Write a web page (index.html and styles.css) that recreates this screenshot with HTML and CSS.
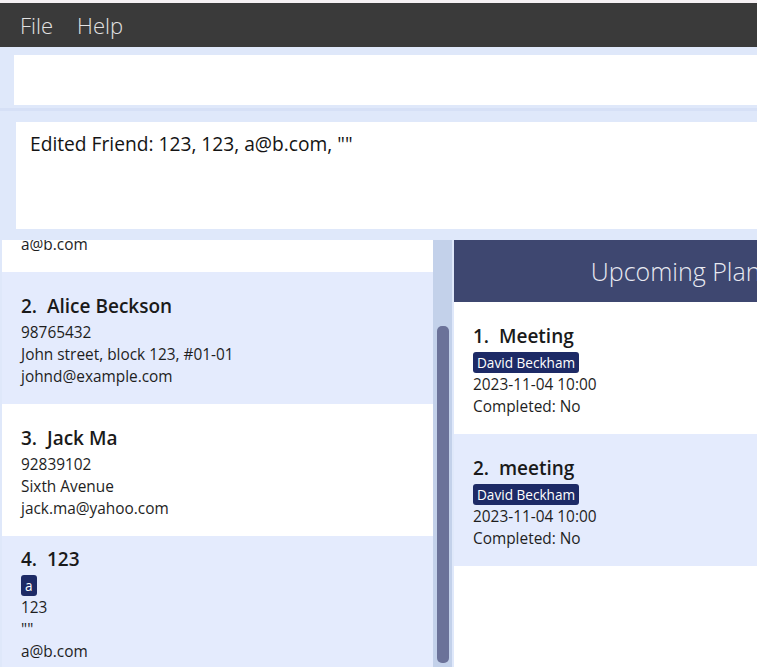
FILE: index.html
```html
<!DOCTYPE html>
<html lang="en">
<head>
<meta charset="utf-8">
<title>Address Book</title>
<link rel="stylesheet" href="styles.css">
</head>
<body>
<div class="app">
  <div class="topstrip"></div>
  <nav class="menubar">
    <span class="menu-item">File</span>
    <span class="menu-item">Help</span>
  </nav>
  <div class="command-area"><div class="command-box"></div></div>
  <div class="result-area"><div class="result-box">Edited Friend: 123, 123, a@b.com, ""</div></div>
  <div class="main">
    <div class="person-list">
      <div class="list-inner">
        <div class="cell odd">
          <div class="name">1.&nbsp;&nbsp;David Beckham</div>
          <div class="tags"><span class="tag">friends</span></div>
          <div class="line">87438807</div>
          <div class="line">Blk 30 Geylang Street 29</div>
          <div class="line">a@b.com</div>
        </div>
        <div class="cell even">
          <div class="name">2.&nbsp;&nbsp;Alice Beckson</div>
          <div class="line">98765432</div>
          <div class="line">John street, block 123, #01-01</div>
          <div class="line">johnd@example.com</div>
        </div>
        <div class="cell odd">
          <div class="name">3.&nbsp;&nbsp;Jack Ma</div>
          <div class="line">92839102</div>
          <div class="line">Sixth Avenue</div>
          <div class="line">jack.ma@yahoo.com</div>
        </div>
        <div class="cell even">
          <div class="name">4.&nbsp;&nbsp;123</div>
          <div class="tags"><span class="tag">a</span></div>
          <div class="line">123</div>
          <div class="line">""</div>
          <div class="line">a@b.com</div>
        </div>
      </div>
    </div>
    <div class="scrollbar"><div class="thumb"></div></div>
    <div class="plans">
      <div class="plans-header">Upcoming Plans</div>
      <div class="cell plan odd">
        <div class="name">1.&nbsp;&nbsp;Meeting</div>
        <div class="tags"><span class="tag">David Beckham</span></div>
        <div class="line">2023-11-04 10:00</div>
        <div class="line">Completed: No</div>
      </div>
      <div class="cell plan even">
        <div class="name">2.&nbsp;&nbsp;meeting</div>
        <div class="tags"><span class="tag">David Beckham</span></div>
        <div class="line">2023-11-04 10:00</div>
        <div class="line">Completed: No</div>
      </div>
    </div>
  </div>
</div>
</body>
</html>
```
FILE: styles.css
```css
html, body {
  margin: 0;
  padding: 0;
}
body {
  width: 757px;
  height: 667px;
  overflow: hidden;
  background: #dfe8fa;
  font-family: "Open Sans", "Noto Sans", sans-serif;
  color: #1e1e1e;
}
.app {
  width: 1000px;
}
.topstrip {
  height: 3px;
  background: #f5f0f3;
}
.menubar {
  height: 44px;
  background: #3a3a3a;
  display: flex;
  gap: 24px;
  padding-left: 20px;
}
.menu-item {
  font-size: 22px;
  font-weight: 300;
  line-height: 44px;
  color: #e2e2e2;
}
.command-area {
  padding: 8px 0 0 14px;
}
.command-box {
  height: 50px;
  background: #ffffff;
}
.result-area {
  margin-top: 3px;
  border-top: 3px solid #d6e0f6;
  padding: 11px 0 11px 16px;
}
.result-box {
  height: 107px;
  box-sizing: border-box;
  background: #ffffff;
  padding: 9px 0 0 14px;
  font-size: 19.2px;
  line-height: 26px;
  color: #141414;
}
.main {
  display: flex;
  height: 427px;
  overflow: hidden;
}
.person-list {
  margin-left: 2px;
  width: 431px;
  flex: none;
  overflow: hidden;
  background: #ffffff;
}
.list-inner {
  margin-top: -111px;
}
.cell {
  min-height: 132px;
  box-sizing: border-box;
  display: flex;
  flex-direction: column;
  justify-content: flex-end;
  padding: 9px 0 16px 19px;
}
.cell.odd { background: #ffffff; }
.cell.even { background: #e4ebfd; }
.cell.plan {
  padding: 8px 0 16px 19px;
}
.name {
  font-size: 19px;
  font-weight: 600;
  line-height: 28px;
  margin-bottom: 2px;
  color: #1a1a1a;
}
.line {
  font-size: 15.4px;
  line-height: 22px;
}
.tags {
  display: flex;
  gap: 4px;
  height: 22px;
}
.tag {
  background: #1d2a66;
  color: #ffffff;
  font-size: 13.6px;
  line-height: 21px;
  height: 21px;
  padding: 0 4px;
  border-radius: 3px;
}
.scrollbar {
  width: 19px;
  flex: none;
  box-sizing: border-box;
  background: #c3d1ea;
  padding: 86px 0 0 4px;
}
.thumb {
  width: 12px;
  height: 337px;
  border-radius: 5px;
  background: #6b7299;
}
.plans {
  margin-left: 2px;
  width: 455px;
  flex: none;
  background: #ffffff;
}
.plans-header {
  height: 62px;
  background: #3e4770;
  color: #e8eaf2;
  font-size: 25px;
  font-weight: 300;
  line-height: 62px;
  text-align: center;
}
```
